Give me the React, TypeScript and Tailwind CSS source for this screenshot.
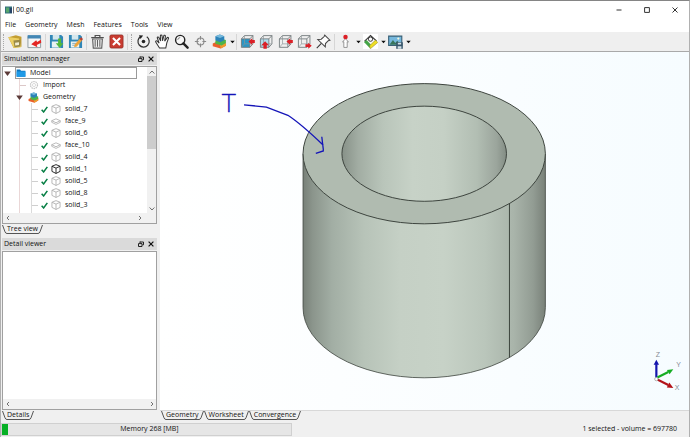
import type { ReactNode } from "react";

const menus = ["File", "Geometry", "Mesh", "Features", "Tools", "View"];

const parts = [
  { name: "solid_7", kind: "solid" },
  { name: "face_9", kind: "face" },
  { name: "solid_6", kind: "solid" },
  { name: "face_10", kind: "face" },
  { name: "solid_4", kind: "solid" },
  { name: "solid_1", kind: "active" },
  { name: "solid_5", kind: "solid" },
  { name: "solid_8", kind: "solid" },
  { name: "solid_3", kind: "solid" },
];

function Icon({ children, className = "size-4" }: { children: ReactNode; className?: string }) {
  return (
    <svg viewBox="0 0 16 16" className={`${className} shrink-0`} fill="none" aria-hidden="true">
      {children}
    </svg>
  );
}

function ToolButton({ label, children, menu = false, white = false }: { label: string; children: ReactNode; menu?: boolean; white?: boolean }) {
  return (
    <div className="flex shrink-0 items-center">
      <button type="button" aria-label={label} className="flex h-5 w-[19px] items-center justify-center">
        <span className={white ? "bg-white" : ""}>
          <Icon className="size-[15px]">{children}</Icon>
        </span>
      </button>
      {menu && (
        <button type="button" aria-label={`${label} options`} className="flex h-5 w-[6px] items-center justify-center">
          <svg viewBox="0 0 6 4" className="h-1 w-[5px]" aria-hidden="true">
            <path d="M0.3 0.5h5.4L3 3.6z" fill="#111" />
          </svg>
        </button>
      )}
    </div>
  );
}

function Separator() {
  return (
    <div className="flex w-[3px] shrink-0 justify-center">
      <div className="h-4 w-px bg-[#d6d6d6]" />
    </div>
  );
}

function Handle() {
  return (
    <div className="flex w-[5px] shrink-0 justify-center">
      <div className="h-4 border-l border-dotted border-[#a8a8a8]" />
    </div>
  );
}

function WireCube({ filled = "none" }: { filled?: string }) {
  return (
    <>
      <path d="M1.5 5.2h9v9h-9z" fill={filled} stroke="#6d7678" strokeWidth="0.9" />
      <path d="M1.5 5.2l3.3-3.5h9l-3.3 3.5M13.8 1.7v8.8l-3.3 3.7" stroke="#6d7678" strokeWidth="0.9" />
      <path d="M4.8 1.7v8.8h9M4.8 10.5l-3.3 3.7" stroke="#8b9496" strokeWidth="0.7" />
    </>
  );
}

function Layers() {
  return (
    <>
      <path d="M0.8 10.2l5.5-2.6 8.6 1.6v3.2l-5.6 3.1-8.5-2.4z" fill="#e9602c" />
      <path d="M8.3 11.3l6.6-2.1v3.2l-5.6 3.1z" fill="#f39a2e" />
      <path d="M3.6 7l5-2.2 6.2 1.7v3.2l-4.6 2.5L3.6 10.4z" fill="#50b548" />
      <path d="M3.6 2.3L8.4.6l4.7 1.7v4.3L8.6 8.9 3.6 6.7z" fill="#2c83b8" />
      <path d="M3.6 2.3L8.4.6l4.7 1.7-4.6 1.9z" fill="#77b9dc" />
    </>
  );
}

function CubeIcon({ kind }: { kind: string }) {
  const color = kind === "active" ? "#222222" : "#b4b4b4";
  return (
    <Icon className="size-[10px]">
      {kind === "face" ? (
        <g stroke={color} strokeWidth="1.4">
          <path d="M1.2 7.5L8 4.5l6.8 3L8 10.8z" />
          <path d="M1.2 7.5v2.6L8 13.4l6.8-3.3V7.5" />
        </g>
      ) : (
        <path d="M8 1l6.5 2.6v8.2L8 15.1l-6.5-3.3V3.6zM1.5 3.6L8 6.6l6.5-3M8 6.6v8.5" stroke={color} strokeWidth="1.5" strokeLinejoin="round" />
      )}
    </Icon>
  );
}

function Expander() {
  return (
    <button type="button" aria-label="Collapse" className="flex h-3 w-[9px] shrink-0 items-center justify-center">
      <svg viewBox="0 0 8 6" className="h-[5px] w-[7px]" aria-hidden="true">
        <path d="M0 0.5h8L4 6z" fill="#5b3a38" />
      </svg>
    </button>
  );
}

function DockHeader({ title }: { title: string }) {
  return (
    <div className="flex h-3 shrink-0 items-center justify-between bg-[#dadada] pr-[3px] pl-[2px]">
      <h2>{title}</h2>
      <div className="flex items-center gap-1">
        <button type="button" aria-label={`Float ${title}`}>
          <svg viewBox="0 0 6 6" className="size-[6px]" fill="none" stroke="#222" aria-hidden="true">
            <path d="M2 1h3.5v2.8H4.4M2 0.5v1.6" />
            <path d="M0.5 2.6H4v2.9H0.5z" />
          </svg>
        </button>
        <button type="button" aria-label={`Close ${title}`}>
          <svg viewBox="0 0 6 6" className="size-[6px]" stroke="#111" strokeWidth="1.2" aria-hidden="true">
            <path d="M0.6 0.6l4.8 4.8M5.4 0.6L0.6 5.4" />
          </svg>
        </button>
      </div>
    </div>
  );
}

function Tab({ children }: { children: ReactNode }) {
  return (
    <button type="button" className="flex h-[9px] shrink-0 items-stretch">
      <svg viewBox="0 0 5 9" className="h-[9px] w-[5px]" fill="none" stroke="#555" aria-hidden="true">
        <path d="M0.5 0L3 6.8Q3.6 8.5 5 8.5" />
      </svg>
      <span className="border-b border-[#555] leading-[8px]">{children}</span>
      <svg viewBox="0 0 5 9" className="h-[9px] w-[5px]" fill="none" stroke="#555" aria-hidden="true">
        <path d="M4.5 0L2 6.8Q1.4 8.5 0 8.5" />
      </svg>
    </button>
  );
}

function Chevron({ d, label }: { d: string; label: string }) {
  return (
    <button type="button" aria-label={label} className="flex size-[9px] items-center justify-center">
      <svg viewBox="0 0 6 6" className="size-[6px]" fill="none" stroke="#707070" aria-hidden="true">
        <path d={d} />
      </svg>
    </button>
  );
}

function HorizontalScroll() {
  return (
    <div className="flex h-[10px] flex-1 items-center justify-between bg-[#f1f1f1]">
      <Chevron label="Scroll left" d="M4 1L2 3l2 2" />
      <Chevron label="Scroll right" d="M2 1l2 2-2 2" />
    </div>
  );
}

function Toolbar() {
  return (
    <div role="toolbar" aria-label="Main tools" className="flex h-5 shrink-0 items-center border-b border-[#a9a9a9] bg-[#efefef]">
      <Handle />
      <ToolButton label="Open">
        <path d="M.3 3.4l8-2 6 1.4v10.8L6 15z" fill="#c39e32" />
        <path d="M.3 3.2l11.4 1.5L14 14 6.2 15z" fill="#ecd064" />
        <path d="M5.8 7l7.4-.8v7l-6.3 1z" fill="#9a8a48" />
        <path d="M7.5 9.2l4.2-.4v3l-4 .4z" fill="#f2edd2" />
      </ToolButton>
      <ToolButton label="Import">
        <path d="M1 2.5h13.5v12H1z" fill="#f4f6f7" stroke="#8d9aa0" />
        <path d="M.7 1.2h14v3.6H.7z" fill="#4387b5" />
        <path d="M14.8 6.2l-4 2.4-1-2L4.5 11l6.6 3-.7-2.2 4.8-2.6z" fill="#e32624" />
      </ToolButton>
      <Separator />
      <ToolButton label="Save">
        <path d="M1 1h12l2 2v12H1z" fill="#3187b7" />
        <path d="M4 1h7v5H4z" fill="#d5e8ee" />
        <path d="M3 8h9v6.5H3z" fill="#eaf2f3" />
        <path d="M9.7 4.8h3.2v5h2.4L11.3 15 7.2 9.8h2.5z" fill="#52b83b" />
      </ToolButton>
      <ToolButton label="Save as">
        <path d="M1 1h12l2 2v12H1z" fill="#3187b7" />
        <path d="M4 1h7v5H4z" fill="#d5e8ee" />
        <path d="M3 8h9v6.5H3z" fill="#f2f3ee" />
        <path d="M4.5 10h6M4.5 12h5" stroke="#7faabe" />
        <path d="M7.2 11.2L13 4.5l2.3 2-5.8 6.7-3 1z" fill="#eda43a" />
        <path d="M12.3 5.3L14 3.5l2 1.8-1.5 2z" fill="#b83e31" />
      </ToolButton>
      <Separator />
      <ToolButton label="Delete">
        <path d="M1.3 3.8h13.4M5.5 3.5V1.6h5v1.9" stroke="#505050" strokeWidth="1.3" />
        <path d="M2.8 5.3h10.4l-.7 9.7h-9z" stroke="#606060" strokeWidth="1.2" />
        <path d="M5.5 6.5v7.2M8 6.5v7.2M10.5 6.5v7.2" stroke="#606060" strokeWidth="1.1" />
      </ToolButton>
      <ToolButton label="Cancel">
        <rect x="1" y="1" width="14" height="14" rx="1.5" fill="#c93c31" stroke="#8f2d26" strokeWidth="0.8" />
        <path d="M4.2 4.2l7.6 7.6M11.8 4.2l-7.6 7.6" stroke="#fff" strokeWidth="2.2" />
      </ToolButton>
      <Separator />
      <Handle />
      <ToolButton label="Rotate">
        <path d="M5 2.8A6 6 0 1 0 11.5 3" stroke="#333" strokeWidth="1.3" />
        <path d="M3.2 1.3l4.4.4-2.8 3.6z" fill="#222" />
        <circle cx="8" cy="8" r="1.9" fill="#222" />
      </ToolButton>
      <ToolButton label="Pan">
        <path d="M4.8 15L2.1 10.6.8 8.5c-.5-1 .8-1.7 1.6-.8l2 2.1L2.5 4.3c-.4-1.2 1-1.7 1.6-.5L6 7.5 5.7 2c0-1.3 1.7-1.3 1.8 0L8 7.2 9.4 2c.3-1.2 1.9-.8 1.7.5L10.3 7.6l2.5-3.5c.7-1 2-.3 1.5.9L12.6 9.5 11.5 15z" fill="#fff" stroke="#333" strokeWidth="1.1" />
      </ToolButton>
      <ToolButton label="Zoom">
        <circle cx="6.6" cy="6.4" r="4.9" fill="#f7f7f7" stroke="#222" strokeWidth="1.5" />
        <path d="M10 10l4.5 4.6" stroke="#222" strokeWidth="2.5" strokeLinecap="round" />
        <path d="M4 6.2A2.8 2.8 0 0 1 6.6 3.8" stroke="#777" />
      </ToolButton>
      <ToolButton label="Center">
        <circle cx="8" cy="8" r="3.7" stroke="#8a8a8a" strokeWidth="1.2" />
        <path d="M8 2v4M8 10v4M2 8h4M10 8h4" stroke="#8a8a8a" strokeWidth="1.2" />
      </ToolButton>
      <ToolButton label="Display mode" menu>
        <Layers />
      </ToolButton>
      <Separator />
      <ToolButton label="Front view">
        <WireCube filled="#2996c5" />
        <path d="M15.8 9.6h-2.8v2L9 8l4-3.6v2h2.8z" fill="#db2027" />
      </ToolButton>
      <ToolButton label="Bottom view">
        <WireCube filled="#b2dcec" />
        <path d="M4.7 15.7V12H2.5l4-4.2 4 4.2H8.3v3.7z" fill="#db2027" />
      </ToolButton>
      <ToolButton label="Right view">
        <WireCube />
        <path d="M15.8 9.6h-2.8v2L9 8l4-3.6v2h2.8z" fill="#db2027" />
      </ToolButton>
      <ToolButton label="Rear view">
        <WireCube />
        <path d="M9 11h3V9.2l3.7 3.3-3.7 3.3v-2H9z" fill="#db2027" />
      </ToolButton>
      <ToolButton label="Pin">
        <path d="M9.3 1.2l5.5 5.4-1.7.5-3 3.1-.2 3.6-8-7.9 3.7-.3 3.1-2.9z" fill="#fff" stroke="#444" strokeWidth="1.1" />
        <path d="M5.7 10l-4.9 5" stroke="#333" strokeWidth="1.1" />
      </ToolButton>
      <Separator />
      <ToolButton label="Vertex selection" menu>
        <path d="M8 5.2l3.2 3.1H9.8v6H6.2v-6H4.8z" fill="#fff" stroke="#777" strokeWidth="0.8" />
        <circle cx="8" cy="3.2" r="2.4" fill="#db2027" />
      </ToolButton>
      <ToolButton label="Measure" menu white>
        <path d="M2 7.3l6-5.7 6 5.5-5.8 6.6z" fill="#fafafa" stroke="#333" strokeWidth="1.1" />
        <circle cx="8" cy="5.5" r="2.3" stroke="#333" />
        <path d="M1 8.5l2.8-2.2 4.5 5L7.2 15z" fill="#45a448" />
        <path d="M7 12.5l6.3-6L15.8 9l-8 6.8z" fill="#f0df24" stroke="#817a1d" strokeWidth="0.5" />
      </ToolButton>
      <ToolButton label="Screenshot" menu>
        <path d="M.7 2.2h14v10H.7z" fill="#76b8dd" stroke="#3a6177" strokeWidth="1.2" />
        <path d="M1.5 11.5l3.8-5 2.5 3 2-2.2 4.2 4.2z" fill="#38755c" />
        <circle cx="11" cy="4.8" r="1.2" fill="#f3f7df" />
        <path d="M8.8 8.8h7v7h-7z" fill="#37566b" />
        <path d="M10.5 9.2h3.5v2h-3.5zM10.3 13h4v2.8h-4z" fill="#d2e0e7" />
      </ToolButton>
    </div>
  );
}

function Tree() {
  return (
    <div className="flex h-[158px] shrink-0 flex-col border border-[#a0a0a0] bg-white">
      <div className="flex min-h-0 flex-1">
        <div role="tree" aria-label="Model" className="min-w-0 flex-1 overflow-hidden">
          <div role="treeitem" className="flex h-3 items-center">
            <Expander />
            <div className="ml-[3px] mr-[10px] flex h-3 flex-1 items-center gap-1 border border-[#9a9a9a]">
              <Icon className="size-[10px]">
                <path d="M1 2.5h5.5l1.5 2h7V14H1z" fill="#0c75bd" />
                <path d="M1 5.5h14V14H1z" fill="#1d9ae8" />
              </Icon>
              <span>Model</span>
            </div>
          </div>
          <div className="ml-[16px] border-l border-[#ead7d7]">
            <div role="treeitem" className="flex h-3 items-center">
              <span className="mr-[3px] h-px w-[6px] bg-[#dcc8c8]" />
              <Icon className="size-[10px]">
                <circle cx="8" cy="8" r="5.6" stroke="#c5c5c5" strokeWidth="2" strokeDasharray="2.4 1.1" />
                <circle cx="8" cy="8" r="2.5" stroke="#c9c9c9" />
              </Icon>
              <span className="ml-1">Import</span>
            </div>
            <div role="treeitem" className="-ml-[5px] flex h-3 items-center">
              <Expander />
              <span className="ml-1 flex items-center gap-1">
                <Icon className="size-[11px]"><Layers /></Icon>
                Geometry
              </span>
            </div>
            <div role="group" className="ml-[11px] border-l border-[#dadada] pb-1">
              {parts.map((part) => (
                <div role="treeitem" key={part.name} className="flex h-3 items-center">
                  <span className="h-px w-[6px] bg-[#cfcfcf]" />
                  <Icon className="ml-[3px] size-[7px]">
                    <path d="M1.5 8.5l4.5 5L14.5 2" stroke="#087f45" strokeWidth="3.6" />
                  </Icon>
                  <span className="ml-[3px] flex items-center gap-1">
                    <CubeIcon kind={part.kind} />
                    {part.name}
                  </span>
                </div>
              ))}
            </div>
          </div>
        </div>
        <div className="flex w-[9px] shrink-0 flex-col bg-[#f1f1f1]">
          <Chevron label="Scroll up" d="M0.6 4.5L3 2l2.4 2.5" />
          <div className="h-[73px] bg-[#cdcdcd]" />
          <div className="flex-1" />
          <Chevron label="Scroll down" d="M0.6 1.5L3 4l2.4-2.5" />
        </div>
      </div>
      <div className="flex shrink-0 bg-[#f1f1f1] pr-3">
        <HorizontalScroll />
      </div>
    </div>
  );
}

function Viewport() {
  return (
    <svg viewBox="0 0 529 359" className="min-h-0 w-full flex-1" fill="none" role="img" aria-label="Hollow cylinder model">
      <defs>
        <linearGradient id="outer" x1="0" x2="1">
          <stop offset="0" stopColor="#788078" />
          <stop offset="0.04" stopColor="#8b958c" />
          <stop offset="0.12" stopColor="#a2aea4" />
          <stop offset="0.25" stopColor="#b7c3b8" />
          <stop offset="0.4" stopColor="#c5d0c5" />
          <stop offset="0.58" stopColor="#c7d2c7" />
          <stop offset="0.75" stopColor="#bac6bb" />
          <stop offset="0.87" stopColor="#a9b4aa" />
          <stop offset="0.95" stopColor="#929c93" />
          <stop offset="1" stopColor="#798179" />
        </linearGradient>
        <linearGradient id="bore" x1="0" x2="1">
          <stop offset="0" stopColor="#879188" />
          <stop offset="0.1" stopColor="#a2ada3" />
          <stop offset="0.25" stopColor="#b9c5ba" />
          <stop offset="0.43" stopColor="#c7d2c7" />
          <stop offset="0.62" stopColor="#c5d0c5" />
          <stop offset="0.82" stopColor="#b2beb3" />
          <stop offset="0.94" stopColor="#9ba59c" />
          <stop offset="1" stopColor="#838d84" />
        </linearGradient>
      </defs>
      <path d="M142.7 102v154.4a121.5 70.3 0 0 0 243 0V102z" fill="url(#outer)" />
      <path d="M142.7 102v154.4a121.5 70.3 0 0 0 243 0V102" stroke="#3d443e" strokeWidth="0.8" />
      <ellipse cx="264.2" cy="102" rx="121.5" ry="70.3" fill="#b0bbb0" stroke="#3d443e" strokeWidth="1" />
      <ellipse cx="264.2" cy="102" rx="82.5" ry="47.7" fill="url(#bore)" stroke="#3d443e" strokeWidth="1" />
      <path d="M349.7 151.5v154.8" stroke="#3d443e" />
      <path d="M83.5 53l22.5 2.2 21.5 8.3c13 8.5 24 19 35.5 30M161.5 85l1.5 12.5v1.7l-7.5 2.5" stroke="#1414b8" strokeWidth="1.3" />
      <text x="61" y="60" fontSize="24" fill="#1414b8" stroke="#1414b8" strokeWidth="0.4" className="font-['DejaVu_Sans',sans-serif] font-extralight">T</text>
      <g strokeWidth="2.2">
        <path d="M497 326.5V313" stroke="#1414ad" />
        <path d="M494.3 313.5l2.7-5 2.7 5z" fill="#1414ad" />
        <path d="M498 326.5l11-5.5" stroke="#16ad23" />
        <path d="M507.6 318.9l6.4-.7-3.7 4.9z" fill="#16ad23" />
        <path d="M498 328.5l11 5.4" stroke="#b31319" />
        <path d="M510 331.5l4 5.4-6.5-.4z" fill="#b31319" />
        <circle cx="497" cy="328" r="1.7" fill="#fff" stroke="#999" strokeWidth="0.7" />
      </g>
      <g fontSize="7" fill="#858b94" className="font-['Liberation_Sans',sans-serif]">
        <text x="496.5" y="305.5">Z</text>
        <text x="517" y="316">Y</text>
        <text x="515.5" y="339">X</text>
      </g>
    </svg>
  );
}

export default function App() {
  return (
    <div className="flex h-screen w-full flex-col border border-y-[#858585] border-x-[#b0b0b0] border-b-0 bg-[#f0f0f0] font-['Open_Sans','Noto_Sans',sans-serif] text-[7px] leading-[10px] whitespace-nowrap text-[#101010]">
      <header className="flex h-[17px] shrink-0 items-center justify-between bg-white pr-[11px] pl-1">
        <div className="flex items-center gap-px">
          <svg viewBox="0 0 10 8" className="h-2 w-[10px]" aria-hidden="true">
            <path d="M0 0.5h7v7H0z" fill="#326f7b" />
            <path d="M1 1.5h3v5H1z" fill="#56a66d" />
            <path d="M5 2h2v5H5z" fill="#284468" />
            <path d="M8 0.5h1v7H8z" fill="#777" />
          </svg>
          <h1>00.gil</h1>
        </div>
        <div className="flex gap-[22px]">
          <button type="button" aria-label="Minimize">
            <svg viewBox="0 0 6 6" className="size-[6px]" stroke="#333" aria-hidden="true"><path d="M0.5 3h5" /></svg>
          </button>
          <button type="button" aria-label="Maximize">
            <svg viewBox="0 0 6 6" className="size-[6px]" fill="none" stroke="#333" aria-hidden="true"><path d="M0.6 0.6h4.8v4.8H0.6z" /></svg>
          </button>
          <button type="button" aria-label="Close">
            <svg viewBox="0 0 6 6" className="size-[6px]" stroke="#333" aria-hidden="true"><path d="M0.5 0.5l5 5M5.5 0.5l-5 5" /></svg>
          </button>
        </div>
      </header>
      <nav className="flex h-[14px] shrink-0 items-center gap-[9px] bg-white pl-1">
        {menus.map((menu) => (
          <button type="button" key={menu}>{menu}</button>
        ))}
      </nav>
      <Toolbar />
      <div className="flex min-h-0 flex-1">
        <aside className="flex w-[159px] shrink-0 flex-col pt-px pr-[3px] pl-px">
          <DockHeader title="Simulation manager" />
          <div className="h-px shrink-0" />
          <Tree />
          <div className="flex h-[14px] shrink-0 items-start pt-px">
            <Tab>Tree view</Tab>
          </div>
          <DockHeader title="Detail viewer" />
          <div className="mt-px flex min-h-0 flex-1 items-end border border-[#a0a0a0] bg-white">
            <HorizontalScroll />
          </div>
          <div className="flex h-[11px] shrink-0 items-start pt-px">
            <Tab>Details</Tab>
          </div>
        </aside>
        <main className="flex min-w-0 flex-1 flex-col">
          <div className="flex min-h-0 flex-1 bg-linear-to-r from-white to-[#f6fcff]">
            <Viewport />
          </div>
          <div className="flex h-[11px] shrink-0 items-start border-t border-[#d8d8d8] pl-px">
            <Tab>Geometry</Tab>
            <Tab>Worksheet</Tab>
            <Tab>Convergence</Tab>
          </div>
        </main>
      </div>
      <footer className="flex h-4 shrink-0 items-center justify-between pr-3">
        <div role="progressbar" aria-label="Memory" aria-valuenow={2} className="flex h-[13px] w-[291px] items-center border border-[#d0d0d0] bg-[#e6e6e6]">
          <div className="h-[11px] w-[6px] bg-[#06b025]" />
          <span className="flex-1 text-center">Memory 268 [MB]</span>
        </div>
        <span>1 selected - volume = 697780</span>
      </footer>
    </div>
  );
}
